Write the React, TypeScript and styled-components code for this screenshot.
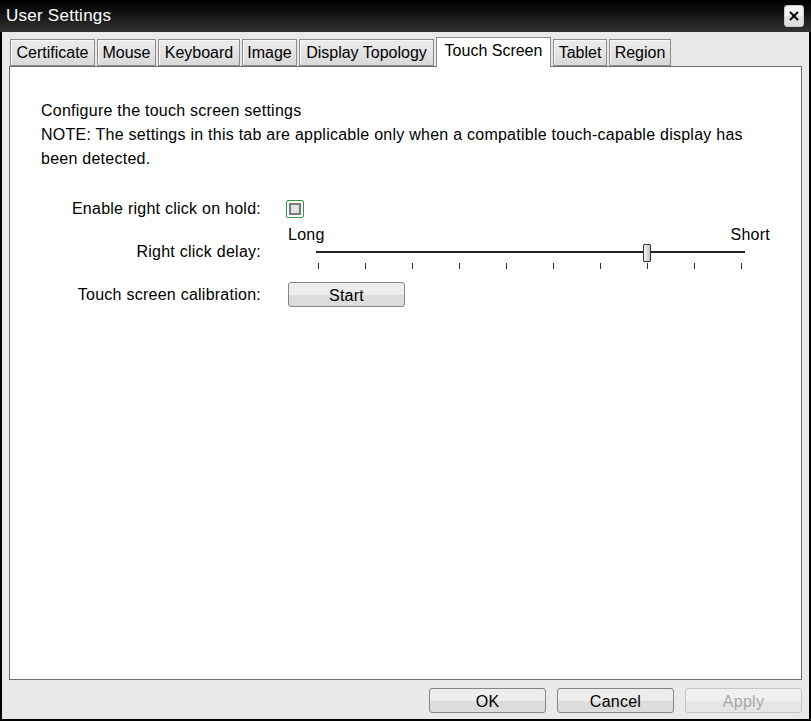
import React from 'react';
import styled, { createGlobalStyle } from 'styled-components';

const GlobalStyle = createGlobalStyle`
  html, body {
    margin: 0;
    padding: 0;
    background: #000;
  }
  body {
    font-family: 'Liberation Sans', Arial, sans-serif;
    font-size: 16px;
    letter-spacing: 0.25px;
    color: #000;
  }
`;

const Window = styled.div`
  width: 811px;
  height: 721px;
  display: flex;
  flex-direction: column;
  box-sizing: border-box;
  overflow: hidden;
`;

const TitleBar = styled.div`
  height: 32px;
  flex: 0 0 32px;
  display: flex;
  align-items: center;
  justify-content: space-between;
  padding: 0 7px 0 6px;
  background: linear-gradient(#000 0%, #111 40%, #333 100%);
  color: #fff;
  font-size: 17px;
`;

const CloseButton = styled.button`
  width: 20px;
  height: 22px;
  margin-top: -1px;
  padding: 0;
  border: 1px solid #c9c9c9;
  border-radius: 3px;
  background: linear-gradient(#f2f2f2 50%, #e0e0e0 50%);
  display: flex;
  align-items: center;
  justify-content: center;
`;

const Body = styled.div`
  flex: 1;
  display: flex;
  flex-direction: column;
  background: #e9e9e9;
  border: 2px solid #000;
  border-top: none;
`;

const TabRow = styled.div`
  display: flex;
  align-items: flex-end;
  gap: 2px;
  padding: 5px 0 0 8px;
  margin-bottom: -1px;
  position: relative;
  z-index: 1;
`;

const Tab = styled.div<{ $width: number; $active?: boolean }>`
  width: ${({ $width }) => $width}px;
  height: ${({ $active }) => ($active ? 30 : 27)}px;
  box-sizing: border-box;
  display: flex;
  align-items: center;
  justify-content: center;
  padding-bottom: ${({ $active }) => ($active ? 3 : 0)}px;
  margin-bottom: ${({ $active }) => ($active ? 0 : 1)}px;
  border: 1px solid #8c8c8c;
  border-bottom: ${({ $active }) => ($active ? 'none' : '1px solid #8c8c8c')};
  background: ${({ $active }) =>
    $active ? '#fff' : 'linear-gradient(#ececec 0%, #e4e4e4 50%, #d8d8d8 100%)'};
  box-shadow: ${({ $active }) => ($active ? 'none' : 'inset 1px 1px 0 #f8f8f8')};
  white-space: nowrap;
  letter-spacing: 0;
`;

const Panel = styled.div`
  flex: 1;
  margin: 0 7px;
  background: #fff;
  border: 1px solid #6e6e6e;
  padding: 32px 0 0 31px;
`;

const Paragraph = styled.p`
  margin: 0;
  line-height: 24px;
  width: 730px;
`;

const Form = styled.div`
  display: flex;
  flex-direction: column;
  margin-top: 28px;
`;

const Row = styled.div<{ $gap: number; $align?: string }>`
  display: flex;
  align-items: ${({ $align }) => $align || 'center'};
  margin-top: ${({ $gap }) => $gap}px;
`;

const Label = styled.div<{ $offset?: number }>`
  width: 220px;
  flex: 0 0 220px;
  text-align: right;
  margin-top: ${({ $offset }) => $offset || 0}px;
  margin-right: 27px;
  line-height: 20px;
`;

const CheckOuter = styled.div`
  width: 18px;
  height: 18px;
  box-sizing: border-box;
  margin-left: -2px;
  border: 1px solid #2f9a3f;
  border-radius: 2px;
  display: flex;
  align-items: center;
  justify-content: center;
`;

const CheckInner = styled.div`
  width: 12px;
  height: 12px;
  box-sizing: border-box;
  border: 2px solid #7a7a7a;
  background: #e2e2e2;
`;

const Slider = styled.div`
  width: 482px;
  display: flex;
  flex-direction: column;
`;

const SliderLabels = styled.div`
  display: flex;
  justify-content: space-between;
  line-height: 20px;
  height: 20px;
`;

const TrackArea = styled.div`
  position: relative;
  margin-left: 28px;
  width: 429px;
  padding-top: 6px;
`;

const Track = styled.div`
  height: 2px;
  background: #222;
`;

const Ticks = styled.div`
  display: flex;
  justify-content: space-between;
  width: 424px;
  margin: 10px 0 0 2px;
  height: 6px;
`;

const Tick = styled.div`
  width: 1px;
  height: 6px;
  background: #333;
`;

const Thumb = styled.div`
  position: absolute;
  top: -1px;
  width: 8px;
  height: 18px;
  box-sizing: border-box;
  border: 1px solid #333;
  border-radius: 1px;
  background: linear-gradient(90deg, #f4f4f4 0%, #d6d6d6 60%, #c4c4c4 100%);
`;

const Button = styled.button<{ $disabled?: boolean }>`
  width: 117px;
  height: 25px;
  padding: 0 0 0 0;
  box-sizing: border-box;
  border: 1px solid ${({ $disabled }) => ($disabled ? '#c4c4c4' : '#858585')};
  border-radius: 3px;
  background: ${({ $disabled }) =>
    $disabled
      ? 'linear-gradient(#f0f0f0 50%, #e6e6e6 50%)'
      : 'linear-gradient(#ededed 50%, #dcdcdc 50%)'};
  color: ${({ $disabled }) => ($disabled ? '#a9a9a9' : '#000')};
  font-family: 'Liberation Sans', Arial, sans-serif;
  font-size: 16px;
  letter-spacing: 0.25px;
  line-height: 26px;
`;

const Footer = styled.div`
  display: flex;
  justify-content: flex-end;
  gap: 11px;
  padding: 8px 7px 6px 0;
`;

const tabs = [
  { name: 'Certificate', width: 85 },
  { name: 'Mouse', width: 59 },
  { name: 'Keyboard', width: 82 },
  { name: 'Image', width: 55 },
  { name: 'Display Topology', width: 135 },
  { name: 'Touch Screen', width: 115, active: true },
  { name: 'Tablet', width: 54 },
  { name: 'Region', width: 62 },
];

const TICK_COUNT = 10;
const TICK_STEP = 47;
const delayValue = 7;

export default function App() {
  return (
    <>
      <GlobalStyle />
      <Window>
        <TitleBar>
          <span>User Settings</span>
          <CloseButton aria-label="Close">
            <svg width="10" height="10" viewBox="0 0 10 10">
              <path d="M1 1 L9 9 M9 1 L1 9" stroke="#000" strokeWidth="2" />
            </svg>
          </CloseButton>
        </TitleBar>
        <Body>
          <TabRow>
            {tabs.map((t) => (
              <Tab key={t.name} $width={t.width} $active={t.active}>
                {t.name}
              </Tab>
            ))}
          </TabRow>
          <Panel>
            <Paragraph>Configure the touch screen settings</Paragraph>
            <Paragraph>
              NOTE: The settings in this tab are applicable only when a compatible touch-capable
              display has been detected.
            </Paragraph>
            <Form>
              <Row $gap={0}>
                <Label>Enable right click on hold:</Label>
                <CheckOuter>
                  <CheckInner />
                </CheckOuter>
              </Row>
              <Row $gap={6} $align="flex-start">
                <Label $offset={17}>Right click delay:</Label>
                <Slider>
                  <SliderLabels>
                    <span>Long</span>
                    <span>Short</span>
                  </SliderLabels>
                  <TrackArea>
                    <Track />
                    <Ticks>
                      {Array.from({ length: TICK_COUNT }).map((_, i) => (
                        <Tick key={i} />
                      ))}
                    </Ticks>
                    <Thumb style={{ left: 2 + delayValue * TICK_STEP - 4 }} />
                  </TrackArea>
                </Slider>
              </Row>
              <Row $gap={13}>
                <Label>Touch screen calibration:</Label>
                <Button>Start</Button>
              </Row>
            </Form>
          </Panel>
          <Footer>
            <Button>OK</Button>
            <Button>Cancel</Button>
            <Button $disabled>Apply</Button>
          </Footer>
        </Body>
      </Window>
    </>
  );
}
